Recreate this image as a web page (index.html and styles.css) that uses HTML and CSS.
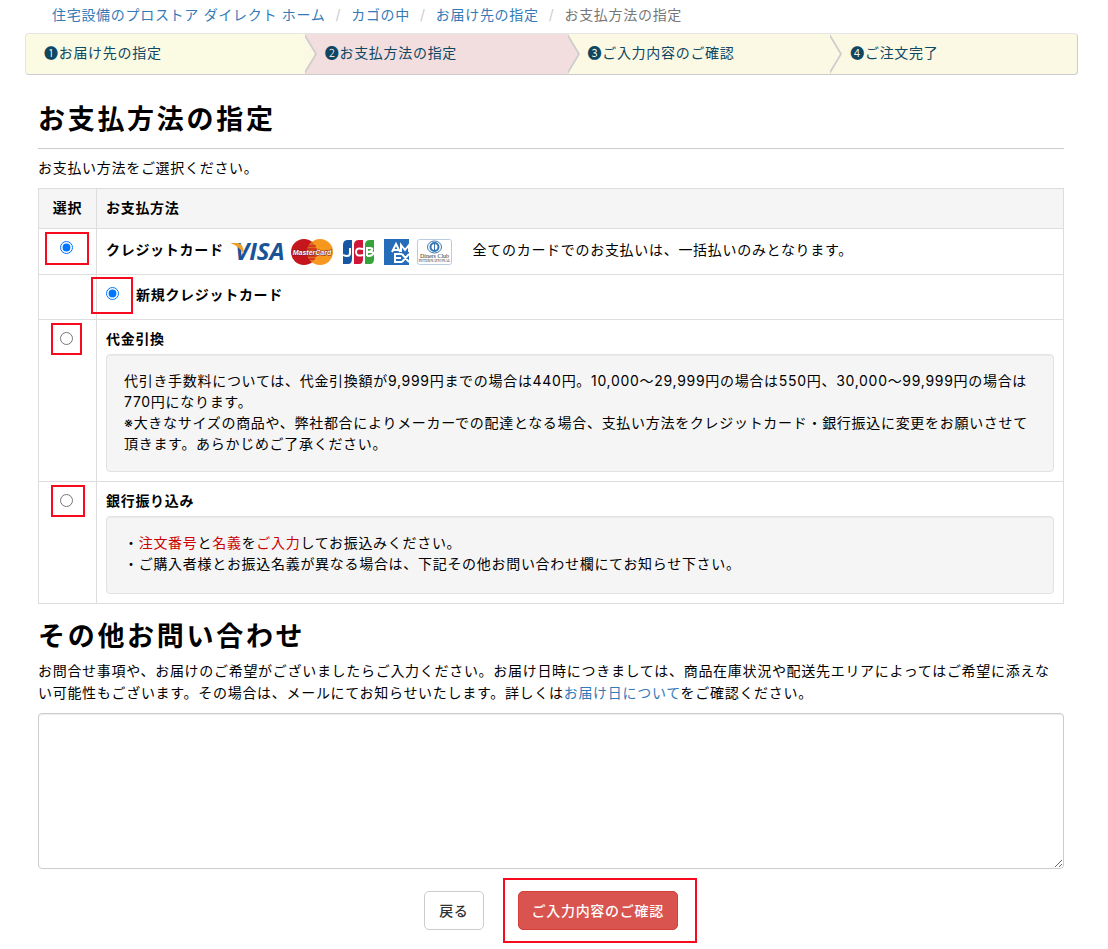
FILE: index.html
```html
<!DOCTYPE html>
<html lang="ja">
<head>
  <meta charset="utf-8">
  <meta name="viewport" content="width=device-width, initial-scale=1">
  <title>お支払方法の指定</title>
  <link rel="stylesheet" href="styles.css">
</head>
<body>
  <nav>
    <ol class="breadcrumb">
      <li><a href="#">住宅設備のプロストア ダイレクト ホーム</a></li>
      <li><a href="#">カゴの中</a></li>
      <li><a href="#">お届け先の指定</a></li>
      <li class="active">お支払方法の指定</li>
    </ol>
  </nav>

  <ol class="steps">
    <li>❶お届け先の指定</li>
    <li class="current">❷お支払方法の指定</li>
    <li>❸ご入力内容のご確認</li>
    <li>❹ご注文完了</li>
  </ol>

  <form class="container">
    <h1>お支払方法の指定</h1>
    <p class="lead">お支払い方法をご選択ください。</p>

    <table class="payment">
      <thead>
        <tr>
          <th class="select">選択</th>
          <th>お支払方法</th>
        </tr>
      </thead>
      <tbody>
        <tr class="credit">
          <td class="select">
            <span class="pick"><input type="radio" name="method" id="credit" checked><span class="mark mark-credit"></span></span>
          </td>
          <td>
            <div class="cards">
              <label for="credit">クレジットカード</label>
              <svg class="visa" width="56" height="26" viewBox="0 0 56 26">
                <text x="5" y="21" font-size="24" font-weight="bold" font-style="italic" fill="#1a5496" font-family="Open Sans, sans-serif">VISA</text>
                <path d="M0 4h8q4 1 5 5l1 6Q9 7 0 4z" fill="#eba02d"/>
              </svg>
              <svg class="mastercard" width="42" height="26" viewBox="0 0 42 26">
                <circle cx="13" cy="13" r="13" fill="#c4161c"/>
                <circle cx="29" cy="13" r="13" fill="#f5981d"/>
                <path d="M21 3a13 13 0 0 1 0 20a13 13 0 0 1 0-20z" fill="#df6521"/>
                <path d="M17 7h8M16 10h10M16 17h10M18 20h6" stroke="#c4161c"/>
                <text x="21" y="16" text-anchor="middle" font-size="7" font-weight="bold" font-style="italic" fill="#fff" stroke="#7a1d1d" stroke-width="1" paint-order="stroke" font-family="Liberation Sans, sans-serif">MasterCard</text>
              </svg>
              <svg class="jcb" width="31" height="26" viewBox="0 0 31 26">
                <path d="M5 1h4v19q0 5-4 5H0V6q0-5 5-5z" fill="#1557a3"/>
                <path d="M16 1h4v19q0 5-4 5h-5V6q0-5 5-5z" fill="#cf1538"/>
                <path d="M27 1h4v19q0 5-4 5h-5V6q0-5 5-5z" fill="#36a43b"/>
                <g fill="none" stroke="#fff" stroke-width="2">
                  <path d="M7 9v5q0 3-3 3-2 0-4-1M20 10q-7-2-7 3t7 3M23 9h4q3 0 2 2-1 2-5 2M24 13h4q3 0 2 2-1 2-6 2M24 9v8"/>
                </g>
              </svg>
              <svg class="amex" width="25" height="26" viewBox="0 0 25 26">
                <path d="M0 0h25v26H0z" fill="#256db8"/>
                <g fill="none" stroke="#fff" stroke-width="2">
                  <path d="M8 13l4-8 4 8M10 11h5M17 13V6l4 5 4-5v7M18 15h-7v8h7M11 19h6M18 15l7 8M25 15l-7 8"/>
                </g>
              </svg>
              <svg class="diners" width="35" height="26" viewBox="0 0 35 26">
                <rect x=".5" y=".5" width="34" height="25" rx="2" fill="#fff" stroke="#b8cbe0"/>
                <ellipse cx="17.5" cy="8" rx="7" ry="6" fill="#fff" stroke="#3775b2" stroke-width="1"/>
                <circle cx="17.5" cy="8" r="4" fill="#fff" stroke="#3775b2" stroke-width="2"/>
                <path d="M17.5 5v6" stroke="#3775b2" stroke-width="1"/>
                <text x="17.5" y="19" text-anchor="middle" font-size="6" fill="#333" font-family="Liberation Serif, serif">Diners Club</text>
                <text x="17.5" y="23" text-anchor="middle" font-size="4" fill="#333" font-family="Liberation Serif, serif">INTERNATIONAL</text>
              </svg>
              <span class="once">全てのカードでのお支払いは、一括払いのみとなります。</span>
            </div>
          </td>
        </tr>
        <tr class="new-card">
          <td class="select"></td>
          <td>
            <span class="pick"><input type="radio" name="card" id="newCard" checked><span class="mark mark-new"></span></span><label for="newCard">新規クレジットカード</label>
          </td>
        </tr>
        <tr>
          <td class="select">
            <span class="pick"><input type="radio" name="method" id="cod"><span class="mark mark-cod"></span></span>
          </td>
          <td>
            <label for="cod">代金引換</label>
            <div class="well">
              代引き手数料については、代金引換額が9,999円までの場合は440円。10,000〜29,999円の場合は550円、30,000〜99,999円の場合は770円になります。<br>
              ※大きなサイズの商品や、弊社都合によりメーカーでの配達となる場合、支払い方法をクレジットカード・銀行振込に変更をお願いさせて頂きます。あらかじめご了承ください。
            </div>
          </td>
        </tr>
        <tr>
          <td class="select">
            <span class="pick"><input type="radio" name="method" id="bank"><span class="mark mark-bank"></span></span>
          </td>
          <td>
            <label for="bank">銀行振り込み</label>
            <div class="well">
              ・<span class="red">注文番号</span>と<span class="red">名義</span>を<span class="red">ご入力</span>してお振込みください。<br>
              ・ご購入者様とお振込名義が異なる場合は、下記その他お問い合わせ欄にてお知らせ下さい。
            </div>
          </td>
        </tr>
      </tbody>
    </table>

    <h2><label for="inquiry">その他お問い合わせ</label></h2>
    <p class="about">お問合せ事項や、お届けのご希望がございましたらご入力ください。お届け日時につきましては、商品在庫状況や配送先エリアによってはご希望に添えない可能性もございます。その場合は、メールにてお知らせいたします。詳しくは<a href="#">お届け日について</a>をご確認ください。</p>
    <textarea id="inquiry"></textarea>

    <div class="buttons">
      <button type="button" class="btn">戻る</button>
      <div class="outline"><button type="submit" class="btn btn-danger">ご入力内容のご確認</button></div>
    </div>
  </form>
</body>
</html>
```

FILE: styles.css
```css
* {
  box-sizing: border-box;
}

body {
  margin: 0;
  font-family: Inter, "Noto Sans CJK JP", sans-serif;
  font-size: 14px;
  line-height: 21px;
  letter-spacing: 0.05em;
  color: #000;
  background: #fff;
}

a {
  color: #337ab7;
  text-decoration: none;
}

.breadcrumb {
  display: flex;
  flex-wrap: wrap;
  margin: 0;
  padding: 4px 52px 8px;
  list-style: none;
}

.breadcrumb li + li::before {
  content: "/";
  padding: 0 10px;
  color: #ccc;
}

.breadcrumb .active {
  color: #777;
}

/* progress bar */
.steps {
  display: flex;
  margin: 0 30px 0 25px;
  padding: 0;
  list-style: none;
  border: 1px solid #ccc;
  border-top-color: #e5e5e5;
  border-left-color: #e5e5e5;
  border-radius: 4px;
  background: #fbf8e3;
  color: #0e4762;
}

.steps li {
  position: relative;
  width: 25%;
  height: 40px;
  padding-left: 20px;
  line-height: 38px;
}

.steps li:first-child {
  width: calc(25% + 16px);
  padding-left: 18px;
  border-radius: 4px 0 0 4px;
  background: #fbfae3;
}

.steps li:last-child {
  flex: 1;
}

.steps .current {
  background: #f2dede;
}

.steps li:not(:last-child)::before,
.steps li:not(:last-child)::after {
  content: "";
  position: absolute;
  top: 0;
  left: 100%;
  z-index: 1;
  border: 20px solid transparent;
  border-right-width: 0;
  border-left: 12px solid #ccc;
}

.steps li:not(:last-child)::after {
  left: calc(100% - 2px);
  border-left-color: #fbf8e3;
}

.steps .current:not(:last-child)::after {
  border-left-color: #f2dede;
}

.container {
  padding: 0 44px 6px 38px;
}

h1,
h2 {
  margin: 0;
  font-size: 27px;
  line-height: 36px;
  letter-spacing: 0.1em;
}

h1 {
  margin-top: 27px;
  padding-bottom: 10px;
  border-bottom: 1px solid #ccc;
}

.lead {
  margin: 8px 0 10px;
}

/* payment table */
.payment {
  width: 100%;
  border-collapse: collapse;
}

.payment th,
.payment td {
  padding: 8px 9px 9px;
  border: 1px solid #ddd;
  text-align: left;
  vertical-align: top;
}

.payment th {
  padding-bottom: 10px;
  background: #f5f5f5;
}

.payment .select {
  width: 58px;
  text-align: center;
}

.payment td.select {
  padding: 9px 10px 9px 8px;
}

.payment label {
  font-weight: bold;
}

.payment .new-card td {
  padding-top: 9px;
  padding-bottom: 14px;
}

.pick {
  display: inline-block;
  position: relative;
  width: 13px;
  height: 13px;
}

.pick input {
  display: block;
  width: 13px;
  height: 13px;
  margin: 0;
}

.new-card .pick {
  margin-right: 17px;
}

.mark {
  position: absolute;
  border: 2px solid #f80a1e;
  pointer-events: none;
}

.mark-credit {
  top: -9px;
  left: -15px;
  width: 44px;
  height: 33px;
}

.mark-new {
  top: -10px;
  left: -15px;
  width: 42px;
  height: 37px;
}

.mark-cod {
  top: -9px;
  left: -9px;
  width: 31px;
  height: 32px;
}

.mark-bank {
  top: -9px;
  left: -9px;
  width: 34px;
  height: 32px;
}

.cards {
  display: flex;
  flex-wrap: wrap;
  align-items: flex-start;
  padding-top: 2px;
}

.cards svg {
  letter-spacing: 0;
}

.visa {
  margin: 0 5px 0 6px;
}

.mastercard {
  margin-right: 10px;
}

.jcb {
  margin-right: 10px;
}

.amex {
  margin-right: 8px;
}

.once {
  margin-left: 21px;
}

.well {
  min-height: 78px;
  margin-top: 5px;
  padding: 15px 17px 17px;
  border: 1px solid #e3e3e3;
  border-radius: 4px;
  background: #f5f5f5;
  box-shadow: inset 0 1px 1px rgba(0, 0, 0, 0.05);
}

.red {
  color: #c00;
}

h2 {
  margin-top: 15px;
}

.about {
  margin: 5px 0 9px;
  line-height: 22px;
}

textarea {
  display: block;
  width: 100%;
  height: 156px;
  padding: 6px 12px;
  border: 1px solid #ccc;
  border-radius: 4px;
  font: inherit;
  box-shadow: inset 0 1px 1px rgba(0, 0, 0, 0.075);
}

.buttons {
  display: flex;
  justify-content: center;
  align-items: center;
  gap: 19px;
  margin-top: 9px;
  padding-left: 19px;
}

.outline {
  padding: 11px 17px 11px 13px;
  border: 2px solid #f80a1e;
}

.btn {
  display: block;
  height: 39px;
  padding: 0 14px;
  border: 1px solid #ccc;
  border-radius: 5px;
  background: #fff;
  color: #333;
  font: inherit;
  font-weight: 500;
  letter-spacing: inherit;
  cursor: pointer;
}

.btn-danger {
  padding: 0 13px;
  border-color: #d43f3a;
  background: #d9534f;
  color: #fff;
}
```
